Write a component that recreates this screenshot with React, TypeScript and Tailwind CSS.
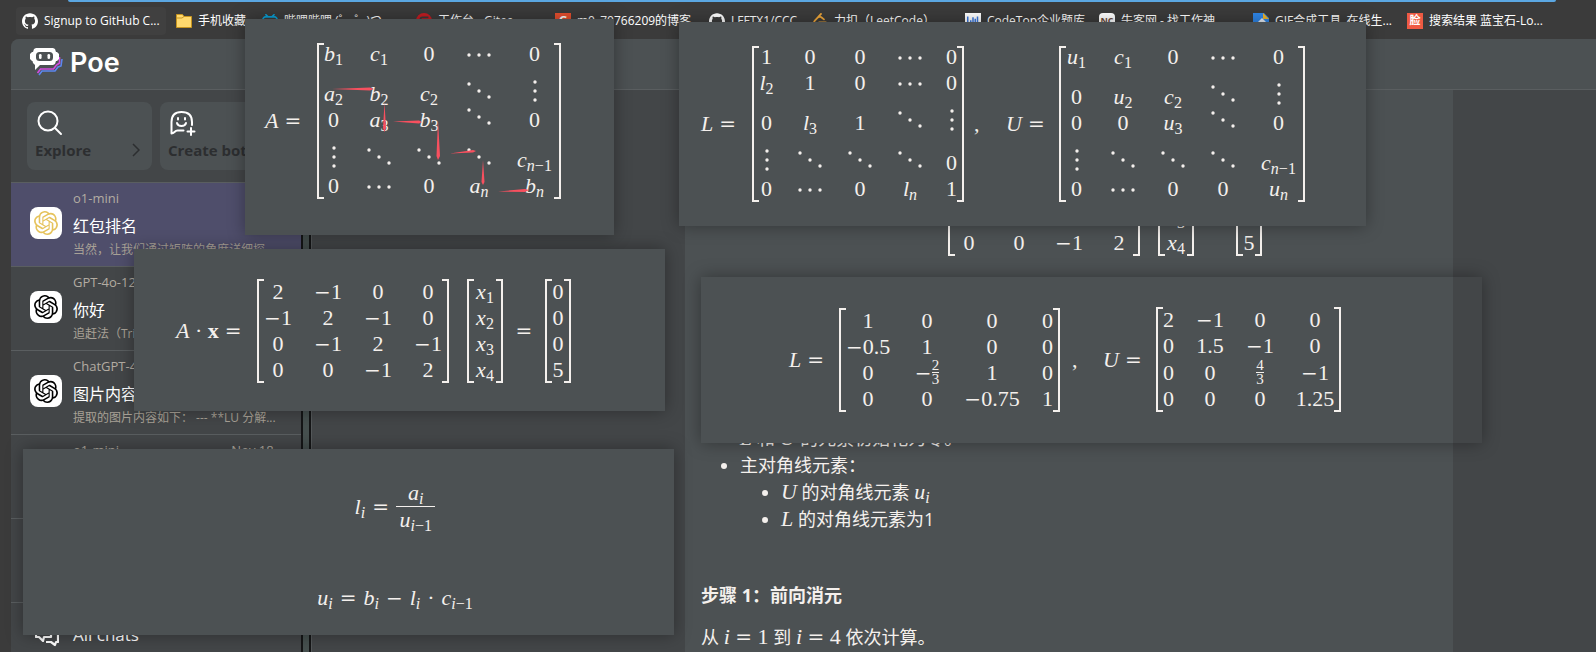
import React, { type ReactNode } from "react";
import { SiOpenai, SiBilibili, SiGithub, SiGitee, SiLeetcode } from "react-icons/si";
import { FaChartBar } from "react-icons/fa";

function V({ children, s }: { children: ReactNode; s?: ReactNode }) {
  return (
    <span className="whitespace-nowrap">
      <i>{children}</i>
      {s !== undefined && <sub className="relative top-1 text-[16px] leading-none">{s}</sub>}
    </span>
  );
}

function Op({ children }: { children: ReactNode }) {
  return <span className="font-['DejaVu_Serif',serif] text-[20px]">{children}</span>;
}

const Eq = () => <Op>=</Op>;
const Neg = ({ children }: { children?: ReactNode }) => (
  <span className="whitespace-nowrap">
    <Op>−</Op>
    {children}
  </span>
);

const N1 = () => (
  <>
    <i>n</i>−1
  </>
);

function Dots({ kind }: { kind: "h" | "v" | "d" }) {
  const points = {
    h: [[2, 13], [12, 13], [22, 13]],
    v: [[12, 0], [12, 9], [12, 18]],
    d: [[2, 2], [12, 9], [22, 15]],
  }[kind];
  return (
    <svg viewBox="0 -2 24 22" className="mb-[5px] h-[22px] w-6 shrink-0" fill="currentColor">
      {points.map(([x, y]) => (
        <circle key={`${x}-${y}`} cx={x} cy={y} r="1.7" />
      ))}
    </svg>
  );
}

function Frac({ a, b }: { a: string; b: string }) {
  return (
    <span className="inline-flex flex-col items-center text-[15px] leading-[13px]">
      <span className="border-b border-current">{a}</span>
      <span>{b}</span>
    </span>
  );
}

function Matrix({ grid, cells }: { grid: string; cells: ReactNode[] }) {
  return (
    <span className="flex">
      <span className="w-[7px] border-y-2 border-l-2 border-current" />
      <span className={`grid items-end gap-x-[22px] leading-[26px] ${grid}`}>
        {cells.map((cell, i) => (
          <span key={i} className="flex items-end justify-center">
            {cell}
          </span>
        ))}
      </span>
      <span className="w-[7px] border-y-2 border-r-2 border-current" />
    </span>
  );
}

const math = "font-['Liberation_Serif',serif] text-[22px] leading-[26px] text-[#f4f0ed]";

function Snip({ className, children }: { className: string; children: ReactNode }) {
  return (
    <section className={`absolute bg-[#4c5153] shadow-[0_0_16px_rgba(0,0,0,0.35)] ${math} ${className}`}>
      {children}
    </section>
  );
}

function Lhs({ name, className }: { name: string; className: string }) {
  return (
    <span className={`flex gap-1.5 ${className}`}>
      <i>{name}</i>
      <Eq />
    </span>
  );
}

function LinearSystem() {
  return (
    <div className="flex items-center">
      <span className="flex w-[81px] gap-1.5 whitespace-nowrap">
        <span>
          <i>A</i> · <b>x</b>
        </span>
        <Eq />
      </span>
      <Matrix
        grid="grid-cols-[28px_28px_28px_28px]"
        cells={[
          "2", <Neg>1</Neg>, "0", "0",
          <Neg>1</Neg>, "2", <Neg>1</Neg>, "0",
          "0", <Neg>1</Neg>, "2", <Neg>1</Neg>,
          "0", "0", <Neg>1</Neg>, "2",
        ]}
      />
      <span className="w-[18px]" />
      <Matrix grid="grid-cols-[22px]" cells={["1", "2", "3", "4"].map((n) => <V s={n}>x</V>)} />
      <span className="w-[42px] text-center">
        <Eq />
      </span>
      <Matrix grid="grid-cols-[12px]" cells={["0", "0", "0", "5"]} />
    </div>
  );
}

function Bookmark({ icon, label, className }: { icon: ReactNode; label: string; className: string }) {
  return (
    <a href="#" className={`flex h-7 items-center gap-1.5 rounded px-1.5 text-[12px] whitespace-nowrap ${className}`}>
      <span className="flex size-4 shrink-0 items-center justify-center">{icon}</span>
      <span>{label}</span>
    </a>
  );
}

function PoeLogo() {
  return (
    <svg viewBox="0 0 33 28" className="h-7 w-[33px]" fill="none">
      <path d="M9 27l3-4h13l3-4 3-1 1-7" stroke="#5c86f0" strokeWidth="1.6" />
      <path d="M7.500 25l3-4h13l3-4 3-2V9" stroke="#d24be0" strokeWidth="1.6" />
      <path
        d="M6 0h17l2 1 1 3h1l2 2v5l-2 2h-1l-1 3-2 1H10l-5 5v-5l-2-2-.500-2h-.500l-2-2V6l2-2h1l1-3z"
        fill="#fff"
      />
      <rect x="6" y="4" width="17" height="9" rx="3.500" fill="#4c5153" />
      <rect x="9" y="6" width="2.600" height="5" rx="1.300" fill="#fff" />
      <rect x="17.500" y="6" width="2.600" height="5" rx="1.300" fill="#fff" />
    </svg>
  );
}

type ChatInfo = { name: string; title: string; text: string; date: string; active?: boolean; tint?: string };

function Chat({ name, title, text, date, active, tint }: ChatInfo) {
  return (
    <a
      href="#"
      className={`flex h-21 items-center gap-[11px] border-t border-[#5a5e60] pr-5 pb-1 pl-[19px] ${active ? "bg-[#4f4e6b]" : ""}`}
    >
      <span className={`flex size-8 shrink-0 items-center justify-center rounded-lg bg-white ${tint ?? "text-black"}`}>
        <SiOpenai className="size-6" />
      </span>
      <span className="min-w-0 flex-1">
        <span className="flex h-5 justify-between text-[13px] leading-5 text-[#b3aca2]">
          <span>{name}</span>
          <span>{date}</span>
        </span>
        <span className="block h-[34px] truncate text-[16px] leading-9 text-white">{title}</span>
        <span className="block h-4 truncate text-[12px] leading-4 text-[#a8a196]">{text}</span>
      </span>
    </a>
  );
}

const chats: ChatInfo[] = [
  { name: "o1-mini", title: "红包排名", text: "当然，让我们通过矩阵的角度详细探", date: "03:12", active: true, tint: "text-[#e6c35c]" },
  { name: "GPT-4o-12", title: "你好", text: "追赶法（Tri", date: "" },
  { name: "ChatGPT-4", title: "图片内容", text: "提取的图片内容如下： --- **LU 分解...", date: "" },
  { name: "o1-mini", title: "", text: "", date: "Nov 18 ›" },
];

const tile =
  "flex h-[68px] flex-1 flex-col justify-between rounded-lg bg-[#4c5153] px-2 pt-2 pb-2.5 text-left text-[15px] leading-5 font-bold text-[#2c2e30]";

export default function App() {
  return (
    <div className="relative h-screen overflow-hidden bg-[#3b3b3b] font-['Open_Sans','Noto_Sans_CJK_SC',sans-serif] text-white">
      <div className="mr-10 ml-[68px] h-0.5 rounded-b bg-[#5ba7e2]" />
      <nav className="flex h-[37px] items-center pl-4">
        <Bookmark className="w-[150px] bg-[#404040]" icon={<SiGithub className="size-4" />} label="Signup to GitHub C..." />
        <Bookmark
          className="ml-1 w-[86px]"
          icon={
            <svg viewBox="0 0 16 16" className="size-4">
              <path d="M.5 1.5h6l1.5 2h7.5v11H.5z" fill="#ffd96e" stroke="#c69420" />
              <path d="M1 5h5l2-1.500" fill="none" stroke="#c69420" />
            </svg>
          }
          label="手机收藏"
        />
        <Bookmark className="w-[154px]" icon={<SiBilibili className="size-4 text-[#0aa1d8]" />} label="哔哩哔哩 (゜-゜)つ" />
        <Bookmark className="w-[139px]" icon={<SiGitee className="size-4 text-[#c71d23]" />} label="工作台 - Gitee" />
        <Bookmark
          className="w-[154px]"
          icon={<span className="flex size-4 items-center justify-center bg-[#e8502f] text-[13px] font-bold">C</span>}
          label="m0_70766209的博客"
        />
        <Bookmark className="w-[103px]" icon={<SiGithub className="size-4" />} label="LFFTX1/CCC" />
        <Bookmark className="w-[153px]" icon={<SiLeetcode className="size-4 text-[#eea63a]" />} label="力扣（LeetCode）" />
        <Bookmark
          className="w-[134px]"
          icon={
            <span className="flex size-4 items-center justify-center bg-white text-[#3a78e0]">
              <FaChartBar className="size-3" />
            </span>
          }
          label="CodeTop企业题库"
        />
        <Bookmark
          className="w-[154px]"
          icon={<span className="flex size-4 items-center justify-center rounded-sm bg-white text-[9px] font-bold text-[#6a4a3a]">NC</span>}
          label="牛客网 - 找工作神..."
        />
        <Bookmark
          className="w-[154px]"
          icon={
            <svg viewBox="0 0 16 16" className="size-4">
              <path d="M0 0h11l5 5v11H0z" fill="#2f86e8" />
              <path d="M10 0l6 6h-6z" fill="#f0b428" />
              <path d="M0 14L9 5l5 5-6 6z" fill="#e8eef5" />
            </svg>
          }
          label="GIF合成工具_在线生..."
        />
        <Bookmark
          className="w-[154px]"
          icon={<span className="flex size-4 items-center justify-center bg-[#ee5a43] text-[11px] font-bold">脸</span>}
          label="搜索结果 蓝宝石-Lo..."
        />
      </nav>

      <div className="ml-[11px] flex h-[613px] flex-col overflow-hidden rounded-tl-lg bg-[#434648]">
        <header className="flex h-[51px] shrink-0 items-center gap-[7px] border-b border-[#5a5e60] bg-[#4c5153] pb-1 pl-[19px]">
          <PoeLogo />
          <h1 className="font-['Inter',sans-serif] text-[27px] leading-none font-semibold">Poe</h1>
        </header>
        <div className="flex min-h-0 flex-1">
          <aside className="flex w-[290px] shrink-0 flex-col">
            <div className="flex shrink-0 gap-2 px-4 py-3">
              <button className={tile}>
                <svg viewBox="0 0 26 26" className="ml-0.5 size-[26px]" fill="none" stroke="#fff" strokeWidth="2">
                  <circle cx="11" cy="11" r="9.500" />
                  <path d="M18 18l6 6" strokeLinecap="round" />
                </svg>
                <span className="flex w-full items-center justify-between">
                  Explore
                  <svg viewBox="0 0 8 14" className="mr-1 h-3.5 w-2" fill="none" stroke="currentColor" strokeWidth="1.5">
                    <path d="M1 1l6 6-6 6" />
                  </svg>
                </span>
              </button>
              <button className={tile}>
                <svg viewBox="0 0 26 26" className="ml-0.5 size-[26px]" fill="none" stroke="#fff" strokeWidth="2" strokeLinecap="round">
                  <path d="M1.500 23.500V12C1.500 5 5 2 11.500 2S22 5 22 12v3M1.500 23.500c3 0 3-3 6-3h6" />
                  <path d="M7 13c1 4 8 4 9 0M8 8v1.500M15 8v1.500M21 18v7M17.500 21.500h7" />
                </svg>
                <span className="whitespace-nowrap">Create bot</span>
              </button>
            </div>
            <div className="min-h-0 flex-1 overflow-hidden">
              {chats.map((chat, i) => (
                <Chat key={i} {...chat} />
              ))}
              <div className="h-21 border-t border-[#5a5e60]" />
              <a href="#" className="flex h-16 items-center gap-3.5 border-t border-[#5a5e60] pl-6 text-[17px]">
                <svg viewBox="0 0 24 24" className="size-6" fill="none" stroke="#fff" strokeWidth="2.200" strokeLinejoin="round">
                  <path d="M3 3h13v11H9l-1 4-4-4H1V3z" />
                  <path d="M19 8h4v11h-2l-1 3-4-3h-5" />
                </svg>
                All chats
              </a>
            </div>
          </aside>
          <div className="w-2.5 shrink-0 border-x-2 border-[#151617] bg-[#46504f]" />
          <main className="flex min-w-0 flex-1 border-l border-[#55595b] pl-[373px]">
            <article className="mr-[143px] flex-1 bg-[#4c5153] px-4 text-[18px] leading-[27px] text-[#f4f0ed]">
              <div className={`pt-[62px] pl-[166px] ${math}`}>
                <LinearSystem />
              </div>
              <ul className="mt-[169px] list-disc pl-[39px]">
                <li>
                  <span className={math}><i>L</i></span> 和 <span className={math}><i>U</i></span> 的元素初始化为零。
                </li>
                <li>
                  主对角线元素：
                  <ul className="list-disc pl-[41px]">
                    <li><span className={math}><i>U</i></span> 的对角线元素 <span className={math}><V s={<i>i</i>}>u</V></span></li>
                    <li><span className={math}><i>L</i></span> 的对角线元素为1</li>
                  </ul>
                </li>
              </ul>
              <h2 className="mt-[49px] font-bold">步骤 1：前向消元</h2>
              <p className="mt-[15px] whitespace-nowrap">
                从 <span className={math}><i>i</i> <Eq /> 1</span> 到 <span className={math}><i>i</i> <Eq /> 4</span> 依次计算。
              </p>
            </article>
          </main>
        </div>
      </div>

      <Snip className="top-[19px] left-[245px] h-[216px] w-[369px] pt-6 pl-5">
        <div className="flex items-center">
          <Lhs name="A" className="w-[52px]" />
          <Matrix
            grid="grid-cols-[19px_28px_28px_28px_39px] grid-rows-[24px_40px_26px_40px_26px]"
            cells={[
              <V s="1">b</V>, <V s="1">c</V>, "0", <Dots kind="h" />, "0",
              <V s="2">a</V>, <V s="2">b</V>, <V s="2">c</V>, <Dots kind="d" />, <Dots kind="v" />,
              "0", <V s="3">a</V>, <V s="3">b</V>, <Dots kind="d" />, "0",
              <Dots kind="v" />, <Dots kind="d" />, <Dots kind="d" />, <Dots kind="d" />, <V s={<N1 />}>c</V>,
              "0", <Dots kind="h" />, "0", <V s={<i>n</i>}>a</V>, <V s={<i>n</i>}>b</V>,
            ]}
          />
        </div>
        <svg viewBox="0 0 369 216" className="absolute inset-0 size-full" fill="#f8505f">
          <path d="M87 70l38-1.500 4 1.500-4 1.500zM139.500 84l-1.500 25 1.500 4 1.500-4zM148 102.500l26-1 3 1.500-3 1.500zM193 101l-1.500 36 1.500 4 2-4zM205 134.500l23-3.500 3 1-3 1.500zM238 141l-1.500 22 1.500 3 1.500-3zM253 172.500l27-2.500 4 1-4 2z" />
        </svg>
      </Snip>

      <Snip className="top-[22px] left-[679px] h-[204px] w-[687px] pt-6 pl-[22px]">
        <div className="flex items-center">
          <Lhs name="L" className="w-[51px]" />
          <Matrix
            grid="grid-cols-[15px_28px_28px_28px_11px] grid-rows-[24px_26px_40px_40px_26px]"
            cells={[
              "1", "0", "0", <Dots kind="h" />, "0",
              <V s="2">l</V>, "1", "0", <Dots kind="h" />, "0",
              "0", <V s="3">l</V>, "1", <Dots kind="d" />, <Dots kind="v" />,
              <Dots kind="v" />, <Dots kind="d" />, <Dots kind="d" />, <Dots kind="d" />, "0",
              "0", <Dots kind="h" />, "0", <V s={<i>n</i>}>l</V>, "1",
            ]}
          />
          <span className="w-[42px] pl-2.5">,</span>
          <Lhs name="U" className="w-[53px]" />
          <Matrix
            grid="grid-cols-[21px_28px_28px_28px_39px] grid-rows-[24px_40px_26px_40px_26px]"
            cells={[
              <V s="1">u</V>, <V s="1">c</V>, "0", <Dots kind="h" />, "0",
              "0", <V s="2">u</V>, <V s="2">c</V>, <Dots kind="d" />, <Dots kind="v" />,
              "0", "0", <V s="3">u</V>, <Dots kind="d" />, "0",
              <Dots kind="v" />, <Dots kind="d" />, <Dots kind="d" />, <Dots kind="d" />, <V s={<N1 />}>c</V>,
              "0", <Dots kind="h" />, "0", "0", <V s={<i>n</i>}>u</V>,
            ]}
          />
        </div>
      </Snip>

      <Snip className="top-[249px] left-[134px] h-[162px] w-[531px] pt-[30px] pl-[42px]">
        <LinearSystem />
      </Snip>

      <Snip className="top-[277px] left-[701px] flex h-[166px] w-[781px] items-start pt-[30px] pl-[88px]">
        <div className="flex items-center">
          <Lhs name="L" className="w-[50px]" />
          <Matrix
            grid="grid-cols-[44px_30px_56px_11px]"
            cells={[
              "1", "0", "0", "0",
              <Neg>0.5</Neg>, "1", "0", "0",
              "0", <span className="flex h-[26px] items-center"><Neg /><Frac a="2" b="3" /></span>, "1", "0",
              "0", "0", <Neg>0.75</Neg>, "1",
            ]}
          />
          <span className="w-[43px] pl-3">,</span>
          <Lhs name="U" className="w-[53px]" />
          <Matrix
            grid="grid-cols-[11px_28px_28px_38px]"
            cells={[
              "2", <Neg>1</Neg>, "0", "0",
              "0", "1.5", <Neg>1</Neg>, "0",
              "0", "0", <Frac a="4" b="3" />, <Neg>1</Neg>,
              "0", "0", "0", "1.25",
            ]}
          />
        </div>
        <span className="absolute inset-y-0 right-0 w-[29px] bg-[#434648]" />
      </Snip>

      <Snip className="top-[449px] left-[23px] flex h-[186px] w-[651px] flex-col items-center pt-[31px] pl-[93px]">
        <div className="flex items-center gap-[7px]">
          <V s={<i>i</i>}>l</V>
          <Eq />
          <span className="flex flex-col items-center">
            <span className="border-b border-current px-3"><V s={<i>i</i>}>a</V></span>
            <V s={<><i>i</i>−1</>}>u</V>
          </span>
        </div>
        <div className="mt-[52px] flex items-center gap-[7px]">
          <V s={<i>i</i>}>u</V>
          <Eq />
          <V s={<i>i</i>}>b</V>
          <Neg />
          <V s={<i>i</i>}>l</V>·<V s={<><i>i</i>−1</>}>c</V>
        </div>
      </Snip>
    </div>
  );
}
